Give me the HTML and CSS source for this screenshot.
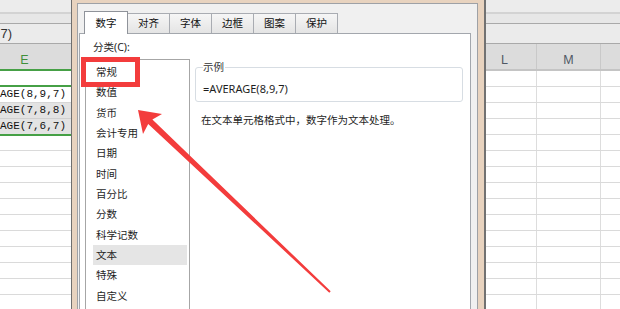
FILE: index.html
```html
<!DOCTYPE html>
<html lang="zh-CN">
<head>
<meta charset="utf-8">
<title>设置单元格格式</title>
<link rel="stylesheet" href="styles.css">
</head>
<body>
<div class="screen">
  <section class="sheet sheet-left">
    <div class="b1"></div>
    <div class="b2"></div>
    <div class="fbar"><span>=AVERAGE(8,9,7)</span></div>
    <div class="colhead"><div class="hcell-e">E</div></div>
    <div class="lrow first"></div>
    <div class="sel">
      <div class="lrow active"><span>=AVERAGE(8,9,7)</span></div>
      <div class="lrow shade"><span>=AVERAGE(7,8,8)</span></div>
      <div class="lrow shade last"><span>=AVERAGE(7,6,7)</span></div>
    </div>
    <div class="lrow after"></div>
    <div class="lrow"></div>
    <div class="lrow"></div>
    <div class="lrow"></div>
    <div class="lrow"></div>
    <div class="lrow"></div>
    <div class="lrow"></div>
    <div class="lrow"></div>
    <div class="lrow"></div>
    <div class="lrow"></div>
    <div class="lrow"></div>
  </section>

  <section class="dialog">
    <div class="client">
      <div class="tabs">
        <div class="tab on">数字</div>
        <div class="tab">对齐</div>
        <div class="tab">字体</div>
        <div class="tab">边框</div>
        <div class="tab">图案</div>
        <div class="tab">保护</div>
      </div>
      <div class="panel">
        <div class="label">分类(C):</div>
        <div class="body">
          <div class="list">
            <div class="item">常规</div>
            <div class="item">数值</div>
            <div class="item">货币</div>
            <div class="item">会计专用</div>
            <div class="item">日期</div>
            <div class="item">时间</div>
            <div class="item">百分比</div>
            <div class="item">分数</div>
            <div class="item">科学记数</div>
            <div class="item sel-item">文本</div>
            <div class="item">特殊</div>
            <div class="item">自定义</div>
          </div>
          <div class="side">
            <fieldset class="sample">
              <legend>示例</legend>
              <div class="formula">=AVERAGE(8,9,7)</div>
            </fieldset>
            <p class="desc">在文本单元格格式中，数字作为文本处理。</p>
          </div>
        </div>
      </div>
    </div>
  </section>

  <section class="sheet sheet-right">
    <div class="b1"></div>
    <div class="b2"></div>
    <div class="fbar"></div>
    <div class="colhead">
      <div class="hcell">L</div>
      <div class="hcell">M</div>
      <div class="hcell rest"></div>
    </div>
    <div class="rrow"><div class="rcell"></div><div class="rcell"></div><div class="rcell rest"></div></div>
    <div class="rrow"><div class="rcell"></div><div class="rcell"></div><div class="rcell rest"></div></div>
    <div class="rrow"><div class="rcell"></div><div class="rcell"></div><div class="rcell rest"></div></div>
    <div class="rrow"><div class="rcell"></div><div class="rcell"></div><div class="rcell rest"></div></div>
    <div class="rrow"><div class="rcell"></div><div class="rcell"></div><div class="rcell rest"></div></div>
    <div class="rrow"><div class="rcell"></div><div class="rcell"></div><div class="rcell rest"></div></div>
    <div class="rrow"><div class="rcell"></div><div class="rcell"></div><div class="rcell rest"></div></div>
    <div class="rrow"><div class="rcell"></div><div class="rcell"></div><div class="rcell rest"></div></div>
    <div class="rrow"><div class="rcell"></div><div class="rcell"></div><div class="rcell rest"></div></div>
    <div class="rrow"><div class="rcell"></div><div class="rcell"></div><div class="rcell rest"></div></div>
    <div class="rrow"><div class="rcell"></div><div class="rcell"></div><div class="rcell rest"></div></div>
    <div class="rrow"><div class="rcell"></div><div class="rcell"></div><div class="rcell rest"></div></div>
    <div class="rrow"><div class="rcell"></div><div class="rcell"></div><div class="rcell rest"></div></div>
    <div class="rrow"><div class="rcell"></div><div class="rcell"></div><div class="rcell rest"></div></div>
    <div class="rrow"><div class="rcell"></div><div class="rcell"></div><div class="rcell rest"></div></div>
  </section>

  <div class="redbox"></div>
  <svg class="arrow" width="620" height="309" viewBox="0 0 620 309">
    <polygon points="138,110 162,114 152.4,119.5 330.7,291.3 329.3,292.7 148.2,123.9 143,134"/>
  </svg>
</div>
</body>
</html>
```

FILE: styles.css
```css
* { box-sizing: border-box; }

body {
  margin: 0;
  width: 620px;
  height: 309px;
  overflow: hidden;
  background: #fff;
  font-family: "Noto Sans", "Noto Sans CJK SC", sans-serif;
  font-size: 10.5px;
  color: #1e1e1e;
}

.screen {
  position: relative;
  display: flex;
  width: 620px;
  height: 309px;
  overflow: hidden;
}

/* ---------- spreadsheet background ---------- */
.sheet {
  display: flex;
  flex-direction: column;
  overflow: hidden;
  height: 309px;
}
.sheet > * { flex-shrink: 0; }
.sheet-left { width: 71px; }
.sheet-right { flex: 1; }

.b1 { height: 14px; background: #ececec; border-bottom: 2px solid #d3d3d3; }
.b2 { height: 10px; background: #e7e7e7; border-bottom: 1px solid #a9a9a9; }
.fbar {
  height: 20px;
  background: #ebebeb;
  border-bottom: 1px solid #a9a9a9;
  display: flex;
  justify-content: flex-end;
  padding-right: 59px;
  overflow: hidden;
  font-family: "Liberation Sans", sans-serif;
  font-size: 13px;
  line-height: 19px;
  color: #333;
  white-space: nowrap;
}
.colhead {
  height: 27px;
  background: #dcdcdc;
  border-bottom: 2px solid #c4c4c4;
  display: flex;
}
.sheet-left .colhead { border-bottom-color: #46a046; }

.hcell-e {
  margin-left: -22px;
  width: 93px;
  flex-shrink: 0;
  text-align: center;
  padding-top: 9px;
  line-height: 14px;
  font-family: "Liberation Sans", sans-serif;
  font-size: 12.5px;
  color: #3f8f3a;
}

.lrow {
  height: 16px;
  border-bottom: 1px solid #dadada;
  display: flex;
  justify-content: flex-end;
  padding-right: 5px;
  overflow: hidden;
  white-space: nowrap;
  font-family: "Liberation Mono", monospace;
  font-size: 11px;
  line-height: 15px;
  color: #111;
}
.lrow.first { height: 14px; border-bottom: none; }
.lrow.after { height: 15px; }
.sel {
  border-top: 2px solid #46a046;
  border-bottom: 2px solid #46a046;
}
.lrow.active { background: #fff; border-bottom-color: #d6d6d6; }
.lrow.shade { background: #e3e3e3; border-bottom-color: #d0d0d0; }
.lrow.last { height: 15px; border-bottom: none; }

.sheet-right .colhead { margin-left: -13px; }
.hcell {
  width: 64px;
  flex-shrink: 0;
  border-right: 1px solid #c9c9c9;
  text-align: center;
  padding-top: 9px;
  line-height: 14px;
  font-family: "Liberation Sans", sans-serif;
  font-size: 12.5px;
  color: #4f5864;
}
.rrow {
  height: 16px;
  margin-left: -13px;
  display: flex;
  border-bottom: 1px solid #dadada;
}
.rcell {
  width: 64px;
  flex-shrink: 0;
  border-right: 1px solid #dddddd;
}
.rest { flex: 1; border-right: none; }

/* ---------- dialog ---------- */
.dialog {
  width: 415px;
  flex-shrink: 0;
  height: 309px;
  display: flex;
  border-left: 1px solid #6f6f6f;
  border-right: 2px solid #727272;
  background: #e8d3bf;
  padding: 3px 6px 0 5px;
}
.client {
  flex: 1;
  display: flex;
  flex-direction: column;
  background: #f0f0f0;
  border: 1px solid #9ea1a6;
  border-bottom: none;
  padding-top: 7px;
}

.tabs {
  display: flex;
  align-items: flex-end;
  height: 22px;
  margin-left: 6px;
  flex-shrink: 0;
}
.tab {
  width: 43px;
  height: 20px;
  margin-left: -1px;
  border: 1px solid #a9acb2;
  border-bottom: none;
  background: linear-gradient(#f6f6f6, #e4e4e4);
  text-align: center;
  line-height: 19px;
  color: #111;
}
.tab.on {
  width: 44px;
  margin-left: 0;
  height: 23px;
  margin-bottom: -1px;
  background: #fff;
  border-color: #8f939a;
  position: relative;
  z-index: 1;
  line-height: 22px;
}

.panel {
  flex: 1;
  margin: 0 6px 0 1px;
  background: #fff;
  border: 1px solid #a3a7ad;
  border-bottom: none;
  padding-top: 6px;
  overflow: hidden;
}
.label {
  margin-left: 13px;
  line-height: 14px;
  color: #222;
}
.body {
  display: flex;
  margin-top: 5px;
}
.list {
  width: 105px;
  height: 260px;
  flex-shrink: 0;
  margin-left: 5px;
  border: 1px solid #a6a6a6;
  border-bottom: none;
  padding: 2px 2px 0 7px;
}
.item {
  height: 20.35px;
  line-height: 20px;
  padding-left: 3px;
  color: #1e1e1e;
}
.item.sel-item { background: #e5e5e5; }

.side {
  width: 268px;
  margin-left: 5px;
  flex-shrink: 0;
}
.sample {
  margin: 1px 0 0 0;
  padding: 8px 7px 5px;
  border: 1px solid #d7dde3;
  border-radius: 3px;
  min-width: 0;
}
.sample legend {
  padding: 0 1px 0 0;
  line-height: 14px;
  color: #333;
}
.formula {
  line-height: 14px;
  font-size: 11px;
  color: #1e1e1e;
}
.desc {
  margin: 11px 0 0 6px;
  line-height: 14px;
  color: #1e1e1e;
}

/* ---------- annotations ---------- */
.redbox {
  position: absolute;
  left: 81px;
  top: 57px;
  width: 59px;
  height: 30px;
  border: 5px solid #f33c3c;
}
.arrow {
  position: absolute;
  left: 0;
  top: 0;
  pointer-events: none;
}
.arrow polygon { fill: #f33c3c; }
```
